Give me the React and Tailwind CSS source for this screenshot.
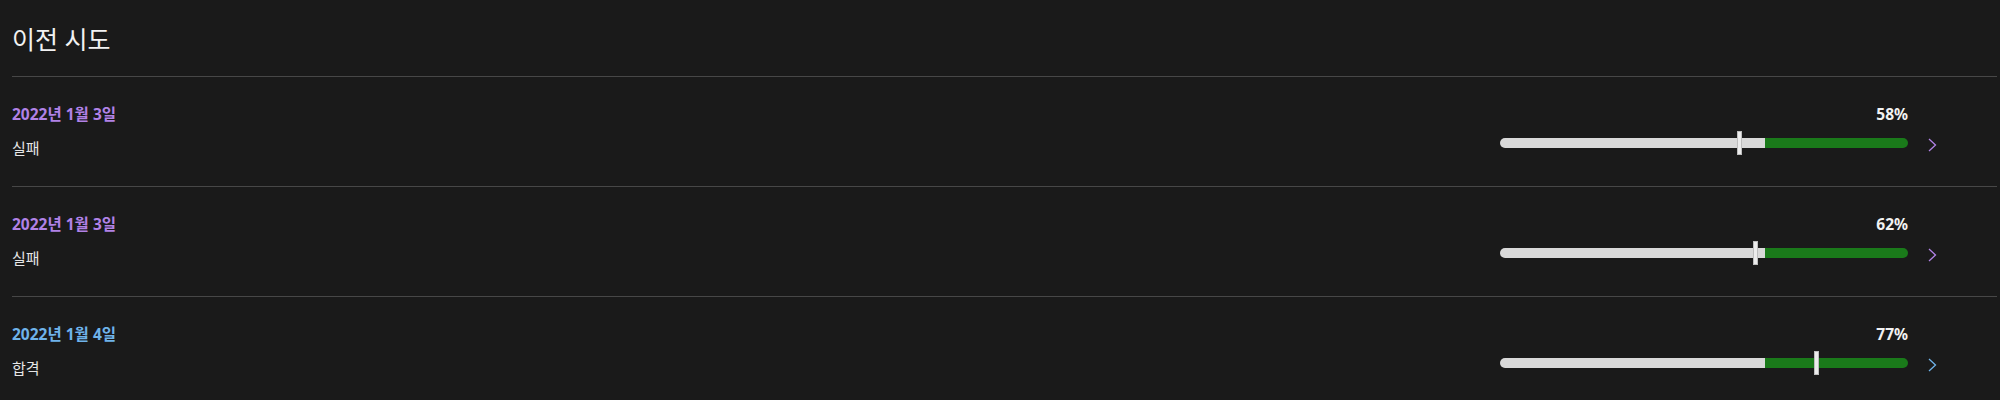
import React from 'react';

const attempts = [
  { date: '2022년 1월 3일', result: '실패', score: 58, passed: false },
  { date: '2022년 1월 3일', result: '실패', score: 62, passed: false },
  { date: '2022년 1월 4일', result: '합격', score: 77, passed: true },
];

const PASS_MARK = 65;

const ScoreBar = ({ score }) => (
  <div className="relative w-[408px] h-[10px]">
    <div className="flex w-full h-full rounded-full overflow-hidden">
      <div className="bg-[#d9d9d9] h-full" style={{ width: `${PASS_MARK}%` }}></div>
      <div className="bg-[#1a7a1a] h-full flex-1"></div>
    </div>
    {/* score marker */}
    <div
      className="absolute top-[-7px] w-[5px] h-[24px] bg-[#ececec] border border-[#bdbdbd]"
      style={{ left: `${score}%` }}
    ></div>
  </div>
);

const AttemptRow = ({ attempt }) => {
  const accent = attempt.passed ? 'text-[#6fb3ea]' : 'text-[#b182e6]';
  return (
    <div className="border-t border-[#474747] h-[110px] flex justify-between">
      <div className="pt-[27px]">
        <div className={`text-[15.5px] leading-5 font-bold ${accent}`}>{attempt.date}</div>
        <div className="text-[15px] leading-5 text-[#e6e6e6] mt-[14px]">{attempt.result}</div>
      </div>
      <div className="pt-[27px] pr-[60px] flex items-start">
        <div className="flex flex-col items-end">
          <span className="text-[15.5px] leading-5 font-bold text-[#f2f2f2]">{attempt.score}%</span>
          <div className="mt-[14px]">
            <ScoreBar score={attempt.score} />
          </div>
        </div>
        <svg className={`ml-[20px] mt-[34px] ${accent}`} width="9" height="14" viewBox="0 0 9 14" fill="none">
          <polyline points="1,1 7.5,7 1,13" stroke="currentColor" strokeWidth="1.3" />
        </svg>
      </div>
    </div>
  );
};

export default function App() {
  return (
    <div
      className="bg-[#1a1a1a] w-full h-[400px] overflow-hidden pl-3 pr-[3px]"
      style={{ fontFamily: '"Noto Sans", "Noto Sans CJK KR", sans-serif' }}
    >
      <h2 className="text-[25px] leading-8 text-[#f2f2f2] pt-[23px] pb-[21px]">이전 시도</h2>
      {attempts.map((a, i) => (
        <AttemptRow key={i} attempt={a} />
      ))}
    </div>
  );
}
